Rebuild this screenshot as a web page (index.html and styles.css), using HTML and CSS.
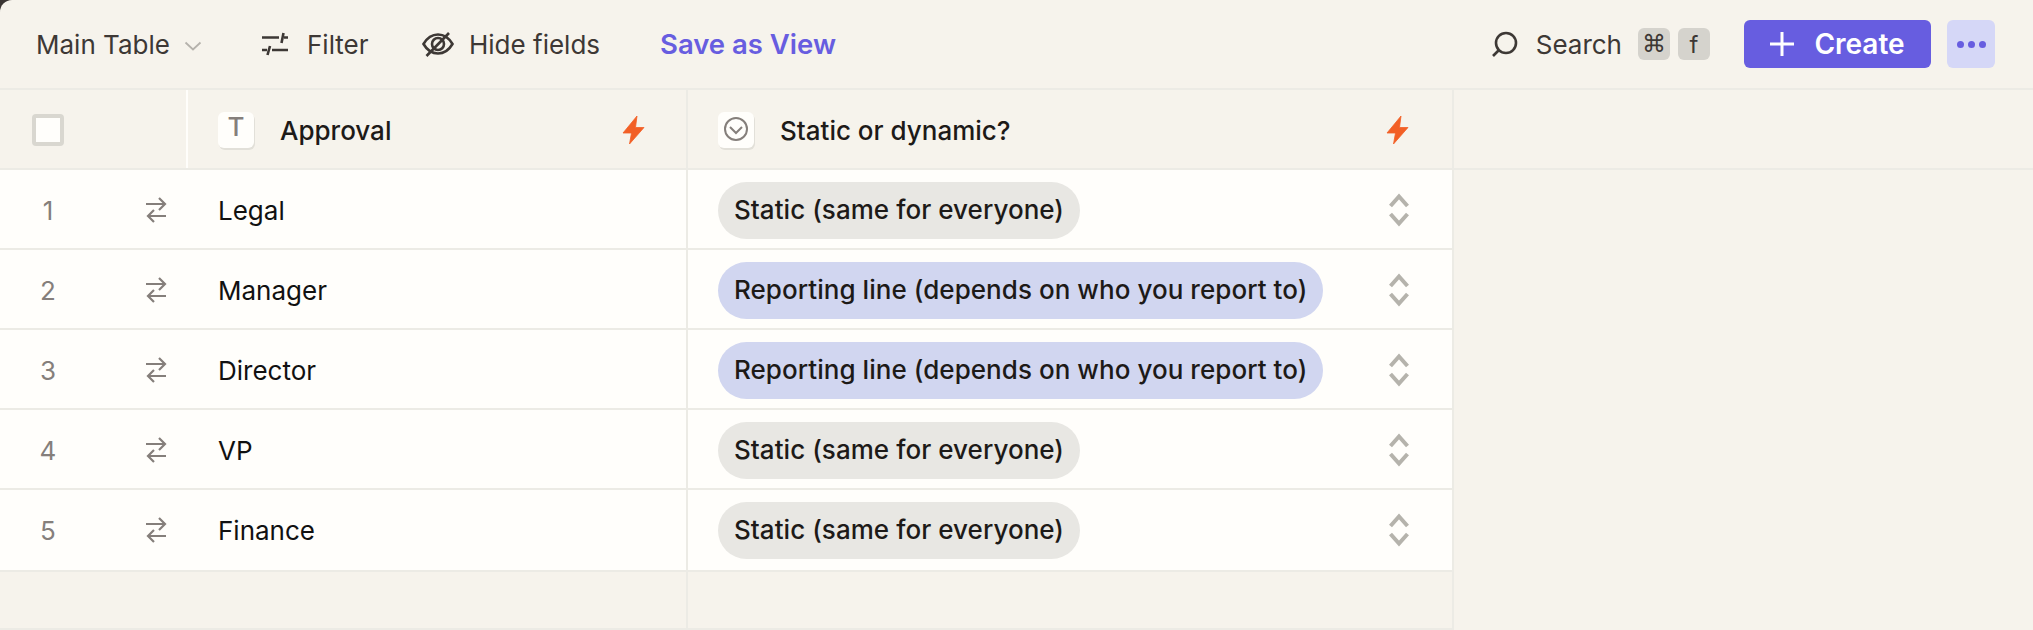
FILE: index.html
```html
<!DOCTYPE html>
<html lang="en">
<head>
<meta charset="utf-8">
<title>Main Table</title>
<link rel="stylesheet" href="styles.css">
</head>
<body>
<div class="app">
  <header class="toolbar">
    <div class="tool view-select">
      <span>Main Table</span>
      <svg class="chev" viewBox="0 0 18 10"><path d="M1.500 1.500 9 8.500l7.500-7"/></svg>
    </div>
    <div class="tool filter">
      <svg class="ico" viewBox="0 0 32 32"><path d="M3 9.500h17M25 9.500h4M24.500 5l-2 10M3 22h5M13 22h16M11 18l-2.500 9"/></svg>
      <span>Filter</span>
    </div>
    <div class="tool hide">
      <svg class="ico" viewBox="0 0 32 32"><path d="M1.500 16C5 10 10 6.500 16 6.500S27 10 30.500 16C27 22 22 25.500 16 25.500S5 22 1.500 16z"/><circle cx="16" cy="16" r="6"/><path d="M4.500 28 27 5"/></svg>
      <span>Hide fields</span>
    </div>
    <div class="save">Save as View</div>
    <div class="spacer"></div>
    <div class="tool search">
      <svg class="ico" viewBox="0 0 32 32"><circle cx="18" cy="15" r="10"/><path d="M10.500 22.500 5 28"/></svg>
      <span>Search</span>
      <div class="keys"><kbd class="key">⌘</kbd><kbd class="key">f</kbd></div>
    </div>
    <button class="create">
      <svg class="plus" viewBox="0 0 24 24"><path d="M12 0v24M0 12h24"/></svg>
      <span>Create</span>
    </button>
    <button class="more"><i></i><i></i><i></i></button>
  </header>

  <div class="grid">
    <div class="head-row">
      <div class="h-check"><div class="checkbox"></div></div>
      <div class="h-col col-a">
        <div class="type-badge"><span class="type-t">T</span></div>
        <div class="h-label">Approval</div>
        <svg class="bolt" viewBox="0 0 21 28"><path d="M14 0 0 17h8.500L6.500 28 21 11.500h-8.500z"/></svg>
      </div>
      <div class="h-col col-b">
        <div class="type-badge"><svg class="type-sel" viewBox="0 0 26 26"><circle cx="13" cy="13" r="11"/><path d="m7 11 6 6 6-6"/></svg></div>
        <div class="h-label">Static or dynamic?</div>
        <svg class="bolt" viewBox="0 0 21 28"><path d="M14 0 0 17h8.500L6.500 28 21 11.500h-8.500z"/></svg>
      </div>
      <div class="rest"></div>
    </div>

    <div class="row">
      <div class="c-num"><span class="num">1</span><svg class="swap" viewBox="0 0 22 26"><path d="M1 7h19M14 1l6 6-6 6M21 19H3M9 13l-6 6 6 6"/></svg></div>
      <div class="c-name">Legal</div>
      <div class="c-sel"><span class="pill gray">Static (same for everyone)</span><svg class="updown" viewBox="0 0 20 34"><path d="M1.500 13 10 3.500l8.500 9.500M1.500 21l8.500 9.500 8.500-9.500"/></svg></div>
      <div class="rest"></div>
    </div>
    <div class="row">
      <div class="c-num"><span class="num">2</span><svg class="swap" viewBox="0 0 22 26"><path d="M1 7h19M14 1l6 6-6 6M21 19H3M9 13l-6 6 6 6"/></svg></div>
      <div class="c-name">Manager</div>
      <div class="c-sel"><span class="pill blue">Reporting line (depends on who you report to)</span><svg class="updown" viewBox="0 0 20 34"><path d="M1.500 13 10 3.500l8.500 9.500M1.500 21l8.500 9.500 8.500-9.500"/></svg></div>
      <div class="rest"></div>
    </div>
    <div class="row">
      <div class="c-num"><span class="num">3</span><svg class="swap" viewBox="0 0 22 26"><path d="M1 7h19M14 1l6 6-6 6M21 19H3M9 13l-6 6 6 6"/></svg></div>
      <div class="c-name">Director</div>
      <div class="c-sel"><span class="pill blue">Reporting line (depends on who you report to)</span><svg class="updown" viewBox="0 0 20 34"><path d="M1.500 13 10 3.500l8.500 9.500M1.500 21l8.500 9.500 8.500-9.500"/></svg></div>
      <div class="rest"></div>
    </div>
    <div class="row">
      <div class="c-num"><span class="num">4</span><svg class="swap" viewBox="0 0 22 26"><path d="M1 7h19M14 1l6 6-6 6M21 19H3M9 13l-6 6 6 6"/></svg></div>
      <div class="c-name">VP</div>
      <div class="c-sel"><span class="pill gray">Static (same for everyone)</span><svg class="updown" viewBox="0 0 20 34"><path d="M1.500 13 10 3.500l8.500 9.500M1.500 21l8.500 9.500 8.500-9.500"/></svg></div>
      <div class="rest"></div>
    </div>
    <div class="row last">
      <div class="c-num"><span class="num">5</span><svg class="swap" viewBox="0 0 22 26"><path d="M1 7h19M14 1l6 6-6 6M21 19H3M9 13l-6 6 6 6"/></svg></div>
      <div class="c-name">Finance</div>
      <div class="c-sel"><span class="pill gray">Static (same for everyone)</span><svg class="updown" viewBox="0 0 20 34"><path d="M1.500 13 10 3.500l8.500 9.500M1.500 21l8.500 9.500 8.500-9.500"/></svg></div>
      <div class="rest"></div>
    </div>

    <div class="foot-row">
      <div class="f-a"></div>
      <div class="f-b"></div>
      <div class="rest"></div>
    </div>
  </div>
</div>
</body>
</html>
```
FILE: styles.css
```css
* { box-sizing: border-box; }
html, body { margin: 0; padding: 0; background: #3a3533; }
body { width: 2033px; height: 630px; overflow: hidden; font-family: Inter, "Liberation Sans", sans-serif; }
.app { width: 2033px; height: 630px; background: #f6f3ec; border-top-left-radius: 12px; overflow: hidden; display: flex; flex-direction: column; }

.toolbar { height: 90px; flex: none; display: flex; align-items: center; padding: 0 0 0 36px; border-bottom: 2px solid #ecebe5; color: #3d3835; font-size: 26px; }
.tool { display: flex; align-items: center; }
.view-select { gap: 14px; width: 223px; }
.chev { width: 18px; height: 10px; margin-top: 4px; fill: none; stroke: #b5b2ac; stroke-width: 1.8; }
.ico { width: 32px; height: 32px; flex: none; fill: none; stroke: #3d3835; stroke-width: 2.600; }
.filter { gap: 16px; width: 163px; }
.hide { gap: 15px; width: 238px; }
.save { color: #675de0; font-weight: 600; font-size: 27.500px; }
.spacer { flex: 1; }
.search { gap: 16px; margin-right: 34px; }
.keys { display: flex; gap: 8px; }
.key { width: 32px; height: 32px; background: #d5d3cd; border-radius: 6px; display: flex; align-items: center; justify-content: center; font-family: "DejaVu Sans", Inter, sans-serif; font-size: 24px; color: #3d3835; }
.key + .key { font-family: Inter, sans-serif; }
.create { width: 187px; height: 48px; background: #675de0; border: 0; border-radius: 6px; color: #fff; font: 600 28px Inter, "Liberation Sans", sans-serif; display: flex; align-items: center; justify-content: center; gap: 20px; padding: 0; }
.plus { width: 24px; height: 24px; fill: none; stroke: #fff; stroke-width: 3; }
.more { width: 48px; height: 48px; margin: 0 38px 0 16px; background: #d5d7f7; border: 0; border-radius: 6px; display: flex; align-items: center; justify-content: center; gap: 4px; padding: 0; }
.more i { width: 7px; height: 7px; border-radius: 50%; background: #675de0; }

.grid { flex: 1; display: flex; flex-direction: column; }
.head-row { height: 80px; flex: none; display: flex; border-bottom: 2px solid #ecebe5; }
.h-check { width: 188px; flex: none; padding: 2px 0 0 32px; display: flex; align-items: center; border-right: 2px solid #fffefb; }
.checkbox { width: 32px; height: 32px; background: #fffefb; border: 4px solid #d9d7d0; border-radius: 4px; }
.h-col { display: flex; align-items: center; border-right: 2px solid #ecebe5; flex: none; }
.col-a { width: 500px; padding: 2px 42px 0 30px; }
.col-b { width: 766px; padding: 2px 44px 0 30px; }
.type-badge { width: 36px; height: 36px; flex: none; background: #fffefb; border-radius: 6px; box-shadow: 1px 2px 0 #e2e0d9; display: flex; align-items: center; justify-content: center; }
.type-t { font-size: 26px; font-weight: 500; color: #857f7b; line-height: 1; padding-bottom: 6px; }
.type-sel { width: 26px; height: 26px; margin-bottom: 3px; fill: none; stroke: #857f7b; stroke-width: 2; }
.h-label { flex: 1; margin-left: 26px; padding-top: 1px; font-size: 26px; font-weight: 500; color: #1d1a18; }
.bolt { width: 21px; height: 28px; fill: #f25f26; stroke: #f25f26; stroke-width: .8; overflow: visible; flex: none; }
.rest { flex: 1; }

.row { height: 80px; flex: none; display: flex; }
.row.last { height: 82px; }
.c-num, .c-name, .c-sel { background: #fffefb; border-bottom: 2px solid #ecebe5; padding-top: 2px; flex: none; display: flex; align-items: center; }
.last .c-num, .last .c-name, .last .c-sel { padding-bottom: 2px; }
.c-num { width: 188px; padding-left: 38px; color: #857f7b; font-size: 26px; }
.num { width: 20px; margin-right: 87px; text-align: center; }
.swap { width: 22px; height: 26px; fill: none; stroke: #857f7b; stroke-width: 2.200; }
.c-name { width: 500px; padding-left: 30px; font-size: 26px; color: #111; border-right: 2px solid #ecebe5; }
.c-sel { width: 766px; justify-content: space-between; padding-left: 30px; padding-right: 43px; border-right: 2px solid #ecebe5; }
.pill { height: 57px; display: flex; align-items: center; padding: 0 16px 2px; border-radius: 29px; font-size: 26px; font-weight: 500; letter-spacing: .05px; color: #1d1a18; }
.gray { background: #e8e7e3; }
.blue { background: #d1d6f0; }
.updown { width: 20px; height: 34px; fill: none; stroke: #b5b3ac; stroke-width: 4; }

.foot-row { flex: 1; display: flex; }
.f-a { width: 688px; flex: none; border-right: 2px solid #ecebe5; border-bottom: 2px solid #ecebe5; }
.f-b { width: 766px; flex: none; border-right: 2px solid #ecebe5; border-bottom: 2px solid #ecebe5; }
```
